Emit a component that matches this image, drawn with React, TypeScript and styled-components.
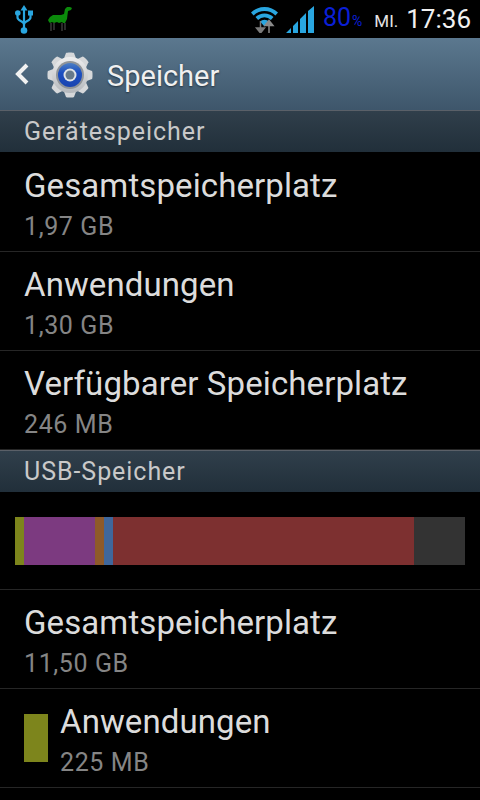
import React, { FunctionComponent } from "react";
import styled, { createGlobalStyle } from "styled-components";

interface EntryProps {
  title: string;
  value: string;
  swatch?: string;
  tall?: boolean;
}

const GlobalStyle = createGlobalStyle`
  html, body {
    margin: 0;
    padding: 0;
    background: #000;
    overflow: hidden;
  }
  body {
    font-family: Roboto, "Liberation Sans", sans-serif;
  }
`;

const Screen = styled.div`
  width: 480px;
  height: 800px;
  overflow: hidden;
  background: #000;
`;

const StatusBar = styled.div`
  height: 38px;
  display: flex;
  align-items: center;
  padding: 0 9px 0 15px;
  background: #000;
`;

const StatusLeft = styled.div`
  display: flex;
  align-items: center;
  gap: 15px;
  flex: 1;
`;

const Radios = styled.div`
  display: flex;
  align-items: center;
  gap: 8px;
`;

const Battery = styled.span`
  margin: 0 1px 0 9px;
  font-size: 25px;
  color: #0a1fd6;
  line-height: 38px;
  small {
    font-size: 14px;
    margin-left: 1px;
  }
`;

const Day = styled.span`
  margin-left: 11px;
  font-size: 17px;
  color: #e4e4e4;
  line-height: 38px;
  padding-top: 4px;
`;

const Clock = styled.span`
  margin-left: 8px;
  font-size: 26px;
  color: #f0f0f0;
  line-height: 38px;
`;

const ActionBar = styled.div`
  height: 72px;
  box-sizing: border-box;
  display: flex;
  align-items: center;
  padding-left: 14px;
  background: linear-gradient(#5b788f, #3e566b);
`;

const GearSlot = styled.div`
  display: flex;
  margin-left: 17px;
  padding-top: 2px;
`;

const PageTitle = styled.h1`
  margin: 0 0 0 14px;
  padding-top: 3px;
  font-size: 29px;
  font-weight: 400;
  color: #f0f0f0;
  text-shadow: 0 1px 2px #24323f;
`;

const SectionHeader = styled.div`
  height: 42px;
  box-sizing: border-box;
  padding-left: 24px;
  border-top: 1px solid #5a6068;
  background: linear-gradient(#303f4b, #212f3a);
  font-size: 25px;
  letter-spacing: 0.95px;
  line-height: 42px;
  color: #c9c9c9;
`;

const Row = styled.div<{ $tall?: boolean }>`
  height: ${(p) => (p.$tall ? 100 : 99)}px;
  box-sizing: border-box;
  display: flex;
  align-items: flex-start;
  padding: ${(p) => (p.$tall ? 15 : 14)}px 0 0 24px;
  border-bottom: 1px solid #262626;
`;

const Swatch = styled.span<{ $color: string }>`
  width: 24px;
  height: 48px;
  margin: 11px 12px 0 0;
  background: ${(p) => p.$color};
`;

const RowText = styled.div`
  display: flex;
  flex-direction: column;
`;

const RowTitle = styled.div`
  font-size: 33px;
  line-height: 38px;
  letter-spacing: 0.1px;
  color: #dcdcdc;
`;

const RowValue = styled.div`
  margin-top: 6px;
  font-size: 25px;
  letter-spacing: 0.6px;
  line-height: 32px;
  color: #858585;
`;

const BarRow = styled.div`
  height: 98px;
  box-sizing: border-box;
  padding: 25px 15px 0;
  border-bottom: 1px solid #262626;
`;

const UsageBar = styled.div`
  display: flex;
  height: 48px;
`;

const UsagePart = styled.span<{ $width: number; $color: string }>`
  width: ${(p) => p.$width}px;
  background: ${(p) => p.$color};
`;

const Entry: FunctionComponent<EntryProps> = ({ title, value, swatch, tall }) => (
  <Row $tall={tall}>
    {swatch && <Swatch $color={swatch} />}
    <RowText>
      <RowTitle>{title}</RowTitle>
      <RowValue>{value}</RowValue>
    </RowText>
  </Row>
);

const UsbIcon = () => (
  <svg width="18" height="29" viewBox="0 0 18 29" fill="none" stroke="#29a6e0" strokeWidth="2.2">
    <path d="M9 3v22M2.500 9v3.500c0 3.500 6.500 3.500 6.500 7M15.500 9v3.500c0 3.500-6.500 3.500-6.500 7" />
    <path d="M9 0l3.500 5.500h-7z" fill="#29a6e0" stroke="none" />
    <circle cx="2.800" cy="8" r="2.800" fill="#29a6e0" stroke="none" />
    <rect x="13" y="5.500" width="5" height="5" fill="#29a6e0" stroke="none" />
    <circle cx="9" cy="25.500" r="3.300" fill="#29a6e0" stroke="none" />
  </svg>
);

const LlamaIcon = () => (
  <svg width="24" height="24" viewBox="0 0 24 24">
    <path d="M3 16v8M6 16v7M14 16v8M17 16v7" stroke="#3d3d3d" strokeWidth="1.400" />
    <path
      d="M0 13l2-3 3-2h8l3-1 1-5 2-2h3l2 1-1 2-3 1-1 8-2 4h-2l-1-1-3 1-2-1-3 1-2-1-2 1-1-1H1z"
      fill="#0b8a0b"
    />
  </svg>
);

const WifiIcon = () => (
  <svg width="27" height="28" viewBox="0 0 27 28">
    <path d="M0 7.500a19.500 19.500 0 0 1 27 0l-2.600 3a15.500 15.500 0 0 0-21.800 0z" fill="#29a6e0" />
    <path d="M4.500 12a13 13 0 0 1 18 0l-2.600 3a9 9 0 0 0-12.800 0z" fill="#29a6e0" />
    <path d="M9 16.500a6.500 6.500 0 0 1 9 0l-4.500 5z" fill="#29a6e0" />
    <path d="M9.500 16v9M5.500 23l4 5 4-5z" stroke="#7a7a7a" strokeWidth="1.500" fill="#7a7a7a" />
    <path d="M18 28v-9M14 20.500l4-5 4 5z" stroke="#8a8a8a" strokeWidth="1.500" fill="#8a8a8a" />
  </svg>
);

const SignalIcon = () => (
  <svg width="28" height="27" viewBox="0 0 28 27" fill="#29a6e0">
    <path d="M0 27l5-5v5zM7 20l5-5v12H7zM14 13l6-6v20h-6zM22 5l6-5v27h-6z" />
  </svg>
);

const BackIcon = () => (
  <svg width="16" height="24" viewBox="0 0 16 24" fill="none">
    <path d="M13 3L4 12l9 9" stroke="#f2f2f2" strokeWidth="4" />
  </svg>
);

const GearIcon = () => {
  const teeth = Array.from({ length: 8 }, (_, i) => i * 45);
  return (
    <svg width="46" height="46" viewBox="0 0 46 46">
      <defs>
        <linearGradient id="steel" x1="0" y1="0" x2="0" y2="1">
          <stop offset="0" stopColor="#eeeeee" />
          <stop offset="1" stopColor="#b4b8bc" />
        </linearGradient>
        <linearGradient id="ring" x1="0" y1="0" x2="0" y2="1">
          <stop offset="0" stopColor="#4d7fc4" />
          <stop offset="0.4" stopColor="#1c4fc0" />
          <stop offset="1" stopColor="#1a44b0" />
        </linearGradient>
      </defs>
      {teeth.map((deg) => (
        <path
          key={deg}
          d="M16 9l3-8c.3-.7 7.700-.7 8 0l3 8z"
          fill="#d6d8da"
          transform={`rotate(${deg} 23 23)`}
        />
      ))}
      <circle cx="23" cy="23" r="18" fill="url(#steel)" />
      <circle cx="23" cy="23" r="14" fill="#8f9499" />
      <circle cx="23" cy="23" r="12" fill="url(#ring)" />
      <circle cx="23" cy="23" r="6.500" fill="#dfe3e6" />
      <circle cx="23" cy="23" r="4.500" fill="#66798a" />
    </svg>
  );
};

const App: FunctionComponent = () => {
  return (
    <Screen>
      <GlobalStyle />
      <StatusBar>
        <StatusLeft>
          <UsbIcon />
          <LlamaIcon />
        </StatusLeft>
        <Radios>
          <WifiIcon />
          <SignalIcon />
        </Radios>
        <Battery>
          80<small>%</small>
        </Battery>
        <Day>MI.</Day>
        <Clock>17:36</Clock>
      </StatusBar>
      <ActionBar>
        <BackIcon />
        <GearSlot>
          <GearIcon />
        </GearSlot>
        <PageTitle>Speicher</PageTitle>
      </ActionBar>
      <SectionHeader>Gerätespeicher</SectionHeader>
      <Entry title="Gesamtspeicherplatz" value="1,97 GB" tall />
      <Entry title="Anwendungen" value="1,30 GB" />
      <Entry title="Verfügbarer Speicherplatz" value="246 MB" />
      <SectionHeader>USB-Speicher</SectionHeader>
      <BarRow>
        <UsageBar>
          <UsagePart $width={9} $color="#7d851c" />
          <UsagePart $width={71} $color="#7c3a80" />
          <UsagePart $width={9} $color="#8e5a2a" />
          <UsagePart $width={9} $color="#3f679c" />
          <UsagePart $width={301} $color="#7d3030" />
          <UsagePart $width={51} $color="#333333" />
        </UsageBar>
      </BarRow>
      <Entry title="Gesamtspeicherplatz" value="11,50 GB" />
      <Entry title="Anwendungen" value="225 MB" swatch="#7d851c" />
    </Screen>
  );
};

export default App;
